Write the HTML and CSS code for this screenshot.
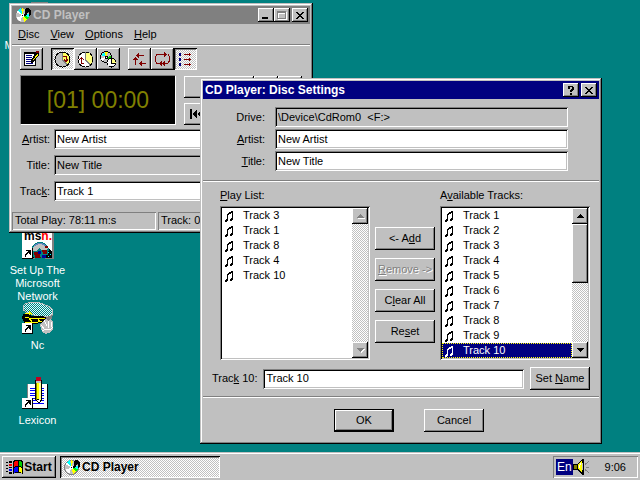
FILE: index.html
```html
<!DOCTYPE html>
<html lang="en">
<head>
<meta charset="utf-8">
<title>Desktop</title>
<link rel="stylesheet" href="styles.css">
</head>
<body>
<svg class="defs" aria-hidden="true">
  <symbol id="note" viewBox="0 0 9 12">
    <path d="M2 4h1v6h-1zM7 1h1v9h-1zM3 3h2v1h-2zM4 2h2v1h-2zM6 1h1v1h-1zM3 4h1v1h-1zM5 3h1v1h-1zM6 2h1v1h-1zM1 9h2v2h-2zM0 10h2v2h-2zM6 8h2v2h-2zM5 9h2v2h-2z" fill="currentColor"/>
  </symbol>
  <symbol id="cd" viewBox="0 0 17 16">
    <circle cx="7.5" cy="8.5" r="7" fill="#c0c0c0" stroke="#808080"/>
    <path d="M7.5 8.5L1 5L4 2z" fill="#fff"/>
    <path d="M7.5 8.5L3 3L6 1z" fill="#0ff"/>
    <path d="M7.5 8.5L7 1L9 2z" fill="#ff0"/>
    <path d="M7.5 8.5L14 10L12 13z" fill="#0f0"/>
    <path d="M7.5 8.5L12 13L9 15z" fill="#ff0"/>
    <path d="M7.5 8.5L5 15L1 11z" fill="#fff"/>
    <path d="M7.5 8.5L14 10L14 7z" fill="#0ff"/>
    <rect x="6" y="7" width="3" height="3" fill="#fff"/><rect x="7" y="8" width="1" height="1"/>
    <path d="M11 1h3v1h1v1h1v5h-1v1h-1V5h-1v1h-1v2h-1v1H9V7h1V2h1z"/>
  </symbol>
  <symbol id="shortcut" viewBox="0 0 11 11">
    <path d="M0 0h11v11H0z"/><path d="M0 0h10v10H0z" fill="#fff"/>
    <path d="M4 2h5v5H8V6H7V5H6v1H5v1H4v2H3V6h1V5h1V4h1V3H4z"/>
  </symbol>
  <symbol id="up" viewBox="0 0 7 4"><path d="M3 0h1v1h1v1h1v1h1v1H0V3h1V2h1V1h1z" fill="currentColor"/></symbol>
  <symbol id="down" viewBox="0 0 7 4"><path d="M0 0h7v1H6v1H5v1H4v1H3V3H2V2H1V1H0z" fill="currentColor"/></symbol>
  <symbol id="close" viewBox="0 0 8 7"><path d="M0 0h2v1h1v1h2V1h1V0h2v1H7v1H6v1H5v1h1v1h1v1h1v1H6V6H5V5H3v1H2v1H0V6h1V5h1V4h1V3H2V2H1V1H0z"/></symbol>
</svg>

<main class="desktop">
  <div class="shortcuts">
    <div class="shortcut row1">
      <svg width="32" height="32" viewBox="0 0 32 32"><path d="M9 0h17v18H9z" fill="#808080"/><path d="M11 3h13v11H11z" fill="#008080"/></svg>
      <span>My Computer</span>
    </div>
    <div class="shortcut row4">
      <svg width="32" height="32" viewBox="0 0 32 32">
        <path d="M0 0h32v32H0z" fill="#808080"/><path d="M0 0h30v31H0z" fill="#fff"/>
        <text x="2" y="13" class="msn">ms<tspan fill="#f00">n.</tspan></text>
        <path d="M10 25l4-4h12l4 4v6H10z"/>
        <circle cx="18" cy="24" r="9" fill="#008080"/>
        <path d="M10 21q8-8 16 0l-2 2h-4l-3-2-3 3h-4z" fill="#c0c0c0"/>
        <path d="M12 19q6-5 12 0" fill="none" stroke="#6080c0"/>
        <path d="M20 23h5v4h-4zM12 25h5l2 6h-6zM23 19h3v2h-3z" fill="#800000"/>
        <path d="M16 24h3v3h-3zM20 28h4v3h-4z" fill="#0000a0"/>
        <path d="M26 24h3v7h-5v-3h2z"/>
        <path d="M26 25h1v1h-1zM28 27h1v1h-1zM26 29h1v1h-1z" fill="#0ff"/>
        <use href="#shortcut" y="21" width="11" height="11"/>
      </svg>
      <span>Set Up The Microsoft Network</span>
    </div>
    <div class="shortcut row5">
      <svg width="32" height="32" viewBox="0 0 32 32">
        <defs><pattern id="mesh" width="2" height="2" patternUnits="userSpaceOnUse"><path d="M0 0h2v2H0z" fill="#008080"/><path d="M0 0h1v1H0zM1 1h1v1H1z" fill="#dff"/></pattern></defs>
        <path d="M3 2l6-2 9 1 8 3 4 3 1 5-4 3-12-1-9-3-5-3V4z" fill="url(#mesh)" stroke="#c0c0c0"/>
        <path d="M1 12l3-1 6 3h9l6 1 4 1-3 4-8 1-9 2-6-1-3-6z"/>
        <path d="M3 15q8 3 20 1M3 20q8 2 17-1M3 11l4 1v-3l3 4M7 16l3 4M16 17l2 3" fill="none" stroke="#ff0"/>
        <path d="M24 15l7-2-2 5-6 2z" fill="#808080"/>
        <path d="M22 18q3-3 4 1 4-4 5 1v8l-4 3q-5 2-7-2l-2-6 2-3z" fill="#c0c0c0"/>
        <path d="M22 18l3 6M26 19l1 7M19 23l4 5M20 29l4-2 4 1 3-3M29 20v5" fill="none" stroke="#fff"/>
        <use href="#shortcut" y="21" width="11" height="11"/>
      </svg>
      <span>Nc</span>
    </div>
    <div class="shortcut row6">
      <svg width="32" height="32" viewBox="0 0 32 32">
        <path d="M6 7h20v25H6z"/><path d="M6 7h19v24H6z" fill="#fff"/><path d="M5 7h1v15h-1z" fill="#808080"/>
        <path d="M8 11.5h14M8 13.5h14M8 16.5h14M8 18.5h14M8 21.5h14M11 23.5h11M11 26.5h11" stroke="#00f"/>
        <path d="M13 3h7v20l-2 3h-2l-3-3z"/><path d="M14 5h1v18h-1z" fill="#808000"/><path d="M15 5h2v17h-2z" fill="#ff0"/><path d="M17 5h2v18h-2z" fill="#ffffa0"/>
        <path d="M14 0h5v4h-5z" fill="#c00020"/><path d="M14 4h5v2h-5z" fill="#c0c0c0"/><path d="M15 23h3v1l-1 1h-1z" fill="#fff"/>
        <use href="#shortcut" y="21" width="11" height="11"/>
      </svg>
      <span>Lexicon</span>
    </div>
  </div>

  <section class="window player" aria-label="CD Player">
    <header class="titlebar inactive">
      <svg class="app-icon" width="17" height="16"><use href="#cd"/></svg>
      <h1>CD Player</h1>
      <div class="caption-buttons">
        <button class="cap" aria-label="Minimize"><svg width="8" height="7"><path d="M0 5h6v2H0z"/></svg></button>
        <button class="cap" aria-label="Maximize" disabled><svg width="10" height="9" viewBox="0 0 10 9"><path d="M1 1h9v8H1zM2 3v5h7V3z" fill="#fff" fill-rule="evenodd"/><path d="M0 0h9v8H0zM1 2v5h7V2z" fill="#808080" fill-rule="evenodd"/></svg></button>
        <button class="cap cap-close" aria-label="Close"><svg width="8" height="7"><use href="#close"/></svg></button>
      </div>
    </header>
    <nav class="menubar">
      <button><u>D</u>isc</button><button><u>V</u>iew</button><button><u>O</u>ptions</button><button><u>H</u>elp</button>
    </nav>
    <div class="toolbar">
      <div class="group">
        <button class="tool" aria-label="Edit play list"><svg width="16" height="16" viewBox="0 0 16 16"><path d="M0 1h12v14H0z"/><path d="M1 3h10v11H1z" fill="#fff"/><path d="M2 4.500h6M2 6.500h6M2 8.500h5M2 10.500h7M2 12.500h7" stroke="#000080"/><path d="M7 9l5-8h3v3l-5 7-3 1z"/><path d="M9 9l4-6 1 1-4 5z" fill="#ff0"/><path d="M12 0h3v2h-3z" fill="#800000"/></svg></button>
      </div>
      <div class="group">
        <button class="tool pressed" aria-label="Track time elapsed"><svg width="17" height="17" viewBox="0 0 17 17"><circle cx="8.500" cy="8.500" r="7.500" fill="#c0c0c0" stroke="#000"/><path d="M8.500 8.500V1a7.500 7.500 0 0 1 5 13z" fill="#ffff60"/><path d="M8.500 1v8l5 5" fill="none" stroke="#808080"/><path d="M9 5.500h3v5M10 8.500l2 2 2-2" fill="none" stroke="#800000"/><circle cx="8.500" cy="8.500" r="7.500" fill="none" stroke="#000"/></svg></button>
        <button class="tool" aria-label="Track time remaining"><svg width="17" height="17" viewBox="0 0 17 17"><circle cx="8.500" cy="8.500" r="7.500" fill="#fff" stroke="#808080"/><path d="M8.500 8.500V1a7.500 7.500 0 0 1 5 13z" fill="#ffff80"/><path d="M8.500 1v8l5 5" fill="none" stroke="#808080"/><path d="M7 12.500H4.500v-6M2 9l2.500-2.500L7 9" fill="none" stroke="#800000"/><circle cx="8.500" cy="8.500" r="7.500" fill="none" stroke="#000" stroke-dasharray="3 1"/></svg></button>
        <button class="tool" aria-label="Disc time remaining"><svg width="17" height="17" viewBox="0 0 17 17"><circle cx="6" cy="6" r="5.500" fill="#c0c0c0" stroke="#000"/><path d="M6 6L1 4l3-3z" fill="#0ff"/><path d="M6 6L5 1h3z" fill="#ff0"/><path d="M6 6l5-1v4z" fill="#0c0"/><path d="M6 6l-4 4-1-3z" fill="#fff"/><path d="M5 5h3v3H5z"/><path d="M6 6h1v1H6z" fill="#fff"/><circle cx="11.500" cy="11.500" r="4.500" fill="#fff" stroke="#000"/><path d="M12 12V8l3 1 1 3z" fill="#ffff80"/><path d="M11.500 8v4h4" fill="none" stroke="#000"/></svg></button>
      </div>
      <div class="group">
        <button class="tool" aria-label="Random track order"><svg width="14" height="13" viewBox="0 0 14 13" class="red"><path d="M4 2.500h7M2.500 12V6M7 10.500h6"/><path class="fill" d="M3 2.500L6 0v5zM2.500 4L0 7h5zM6 10.500L9 8v5z"/></svg></button>
        <button class="tool" aria-label="Continuous play"><svg width="17" height="14" viewBox="0 0 17 14" class="red"><path d="M10 2.500h-7L1.500 5v4L3 11.500h2M14 11l1.500-2V5L14 2.500M10 11.500h4"/><path class="fill" d="M13 2.500L10 0v5zM5 11.500L8 9v5zM8 11.500L11 9v5z"/></svg></button>
        <button class="tool pressed" aria-label="Intro play"><svg width="15" height="14" viewBox="0 0 15 14" class="red"><path d="M6 2.500h7M6 7.500h7M6 12.500h7M11.500 1v3M11.500 6v3M11.500 11v3"/><path class="blue" d="M1 1h2v3H1zM1 6h2v3H1zM1 11h2v3H1z"/></svg></button>
      </div>
    </div>
    <div class="deck">
      <output class="lcd">[01] 00:00</output>
      <div class="transport">
        <button class="push play" aria-label="Play"></button><button class="push" aria-label="Pause"></button><button class="push" aria-label="Stop"></button>
        <div class="skip"><button class="push" aria-label="Previous track"><svg width="12" height="10" viewBox="0 0 12 10"><path d="M0 0h2v10H0zM2 5l5-5v10zM7 5l5-5v10z"/></svg></button><button class="push" aria-label="Skip backwards"></button><button class="push" aria-label="Skip forwards"></button><button class="push" aria-label="Next track"></button><button class="push" aria-label="Eject"></button></div>
      </div>
    </div>
    <div class="fields">
      <label for="p-artist"><u>A</u>rtist:</label><input id="p-artist" class="sunken" value="New Artist">
      <label for="p-title">Title:</label><input id="p-title" class="sunken readonly" value="New Title" readonly>
      <label for="p-track">Trac<u>k</u>:</label><input id="p-track" class="sunken" value="Track 1">
    </div>
    <footer class="statusbar"><span>Total Play: 78:11 m:s</span><span>Track: 04:12 m:s</span></footer>
  </section>

  <section class="window dialog" role="dialog" aria-label="CD Player: Disc Settings">
    <header class="titlebar">
      <h2>CD Player: Disc Settings</h2>
      <div class="caption-buttons">
        <button class="cap" aria-label="Help"><svg width="8" height="9"><path d="M1 0h5v1h1v3H6v1H5v1H3V4h1V3h1V1H3v2H1V1H0V1h1zM3 7h2v2H3z"/></svg></button>
        <button class="cap cap-close" aria-label="Close"><svg width="8" height="7"><use href="#close"/></svg></button>
      </div>
    </header>
    <div class="disc-form">
      <label for="drive">Drive:</label><input id="drive" class="sunken readonly" value="\Device\CdRom0  &lt;F:&gt;" readonly>
      <label for="artist"><u>A</u>rtist:</label><input id="artist" class="sunken" value="New Artist">
      <label for="title"><u>T</u>itle:</label><input id="title" class="sunken" value="New Title">
    </div>
    <hr>
    <div class="lists">
      <div class="list-col">
        <span class="caption" id="play-label"><u>P</u>lay List:</span>
        <div class="listbox">
          <ul role="listbox" aria-labelledby="play-label">
            <li role="option"><svg><use href="#note"/></svg>Track 3</li>
            <li role="option"><svg><use href="#note"/></svg>Track 1</li>
            <li role="option"><svg><use href="#note"/></svg>Track 8</li>
            <li role="option"><svg><use href="#note"/></svg>Track 4</li>
            <li role="option"><svg><use href="#note"/></svg>Track 10</li>
          </ul>
          <div class="scrollbar">
            <button class="arrow" disabled aria-label="Scroll up"><svg width="7" height="4"><use href="#up"/></svg></button>
            <div class="trough"></div>
            <button class="arrow" disabled aria-label="Scroll down"><svg width="7" height="4"><use href="#down"/></svg></button>
          </div>
        </div>
      </div>
      <div class="actions">
        <button class="push"><span>&lt;- A<u>d</u>d</span></button>
        <button class="push" disabled><span><u>R</u>emove -&gt;</span></button>
        <button class="push"><span>C<u>l</u>ear All</span></button>
        <button class="push"><span>Re<u>s</u>et</span></button>
      </div>
      <div class="list-col">
        <span class="caption" id="avail-label">A<u>v</u>ailable Tracks:</span>
        <div class="listbox">
          <ul role="listbox" aria-labelledby="avail-label">
            <li role="option"><svg><use href="#note"/></svg>Track 1</li>
            <li role="option"><svg><use href="#note"/></svg>Track 2</li>
            <li role="option"><svg><use href="#note"/></svg>Track 3</li>
            <li role="option"><svg><use href="#note"/></svg>Track 4</li>
            <li role="option"><svg><use href="#note"/></svg>Track 5</li>
            <li role="option"><svg><use href="#note"/></svg>Track 6</li>
            <li role="option"><svg><use href="#note"/></svg>Track 7</li>
            <li role="option"><svg><use href="#note"/></svg>Track 8</li>
            <li role="option"><svg><use href="#note"/></svg>Track 9</li>
            <li role="option" class="selected" aria-selected="true"><svg><use href="#note"/></svg>Track 10</li>
          </ul>
          <div class="scrollbar">
            <button class="arrow" aria-label="Scroll up"><svg width="7" height="4"><use href="#up"/></svg></button>
            <div class="trough"><div class="thumb"></div></div>
            <button class="arrow" aria-label="Scroll down"><svg width="7" height="4"><use href="#down"/></svg></button>
          </div>
        </div>
      </div>
    </div>
    <div class="name-row">
      <label for="track-name">Trac<u>k</u> 10:</label><input id="track-name" class="sunken" value="Track 10">
      <button class="push"><span>Set <u>N</u>ame</span></button>
    </div>
    <hr>
    <footer class="dialog-buttons"><button class="push default">OK</button><button class="push">Cancel</button></footer>
  </section>
</main>

<footer class="taskbar">
  <button class="push start"><svg width="18" height="16" viewBox="0 0 18 16">
    <path d="M7 2q4-3 10 0v13q-5-3-10 0z"/>
    <path d="M8 3q2-1 4-1v5q-2 0-4 1z" fill="#f00"/><path d="M13 2l3 1v5l-3-1z" fill="#0c0"/><path d="M8 9q2-1 4-1v5q-2 0-4 1z" fill="#00f"/><path d="M13 8l3 1v5l-3-1z" fill="#ff0"/>
    <path d="M0 3h2v1H0zM0 6h2v1H0zM0 9h2v1H0zM0 12h2v1H0zM3 2h3v2H3zM3 8h3v1H3zM3 13h3v2H3z"/>
    <path d="M3 5h3v2H3z" fill="#f00"/><path d="M3 10h3v2H3z" fill="#00f"/></svg>Start</button>
  <button class="push task pressed"><svg width="17" height="16"><use href="#cd"/></svg>CD Player</button>
  <div class="tray"><span class="lang">En</span><svg width="17" height="16" viewBox="0 0 17 16"><path d="M0 5h4l5-5h2v16H9l-5-5H0z"/><path d="M1 6h3v4H1zM5 5l4-4v13l-4-4z" fill="#ff0"/><path d="M1 6h3v4H1z" fill="#808000"/><path d="M7 4h1v2H7zM6 6h1v3H6z" fill="#fff"/><path d="M9 4h1v7H9z" fill="#c0c0c0"/><path d="M12 5.500l4-3M13 8h3M12 10.500l4 3" stroke="#808080"/></svg><time>9:06</time></div>
</footer>
</body>
</html>
```
FILE: styles.css
```css
* { box-sizing: border-box; }

body {
  margin: 0;
  min-height: 100vh;
  display: flex;
  flex-direction: column;
  background: #008080;
  color: #000;
  font: 11px/13px "Liberation Sans", Arial, sans-serif;
}

button, input { font: inherit; color: inherit; margin: 0; border-radius: 0; }
button { padding: 0; border: 0; background: #c0c0c0; }
svg { display: block; flex: none; shape-rendering: crispEdges; }
u { text-underline-offset: 1px; text-decoration-thickness: 1px; text-decoration-skip-ink: none; }
.defs { position: absolute; width: 0; height: 0; }

.desktop { flex: 1; position: relative; overflow: hidden; }

/* Desktop shortcuts */
.shortcuts {
  display: grid;
  grid-template-rows: repeat(6, 75px);
  width: 75px;
  padding-top: 2px;
}
.shortcut {
  display: flex;
  flex-direction: column;
  align-items: center;
  gap: 5px;
  color: #fff;
  text-align: center;
}
.shortcut span { max-width: 68px; }
.row1 { grid-row: 1; }
.row4 { grid-row: 4; }
.row5 { grid-row: 5; }
.row6 { grid-row: 6; }
.msn { font: bold 12px "Liberation Sans", Arial, sans-serif; }

/* Windows */
.window {
  position: absolute;
  padding: 3px;
  background: #c0c0c0;
  box-shadow: inset -1px -1px #000, inset 1px 1px #c0c0c0, inset -2px -2px #808080, inset 2px 2px #fff;
}
.player { left: 9px; top: 3px; width: 304px; }
.dialog { left: 200px; top: 78px; width: 402px; }

.titlebar {
  display: flex;
  align-items: center;
  height: 18px;
  padding: 0 2px;
  background: #000080;
  color: #fff;
}
.titlebar.inactive { background: #808080; color: #c0c0c0; }
.titlebar h1, .titlebar h2 { margin: 0; font: bold 12px/14px "Liberation Sans", Arial, sans-serif; }
.app-icon { margin: 0 1px; }
.caption-buttons { display: flex; margin-left: auto; }

.cap, .push, .arrow, .thumb, .tool {
  display: flex;
  align-items: center;
  justify-content: center;
  box-shadow: inset -1px -1px #000, inset 1px 1px #fff, inset -2px -2px #808080;
}
.cap { width: 16px; height: 14px; }
.cap-close { margin-left: 2px; }

.menubar { display: flex; height: 20px; padding: 0 6px; gap: 11px; }

.toolbar {
  display: flex;
  gap: 8px;
  padding: 4px 8px 5px;
  box-shadow: inset 0 1px #808080, inset 0 2px #fff;
}
.group { display: flex; }
.tool { width: 23px; height: 22px; }
.pressed, .trough {
  background: repeating-conic-gradient(#fff 0 25%, #c0c0c0 0 50%) 0 0 / 2px 2px;
}
.pressed { box-shadow: inset 1px 1px #000, inset -1px -1px #fff, inset 2px 2px #808080; }
.red { fill: none; stroke: #800000; }
.red .fill { fill: #800000; stroke: none; }
.red .blue { fill: #000080; stroke: none; }

.deck { display: flex; gap: 8px; padding: 0 8px; }
.lcd {
  flex: none;
  width: 156px;
  height: 50px;
  background: #000;
  border: 1px solid;
  border-color: #808080 #fff #fff #808080;
  color: #808000;
  font-size: 23px;
  line-height: 48px;
  text-align: center;
}
.transport { flex: 1; display: grid; grid-template-columns: 1fr 24px 24px; row-gap: 5px; align-content: center; }
.transport .push { height: 22px; min-width: 24px; }
.skip { grid-column: 1 / -1; display: flex; }
.skip .push { flex: 1; }

.sunken {
  width: 100%;
  min-width: 0;
  height: 20px;
  padding: 0 3px 1px;
  border: 0;
  outline: 0;
  white-space: pre;
  background: #fff;
  box-shadow: inset 1px 1px #808080, inset -1px -1px #fff, inset 2px 2px #000, inset -2px -2px #c0c0c0;
}
.sunken.readonly { background: #c0c0c0; }

.fields {
  display: grid;
  grid-template-columns: 38px 1fr;
  align-items: center;
  gap: 6px 4px;
  padding: 4px 8px 11px 0;
}
.fields label, .disc-form label { text-align: right; }

.statusbar { display: grid; grid-template-columns: 144px 1fr; gap: 2px; }
.statusbar span {
  height: 18px;
  padding: 2px 3px;
  white-space: nowrap;
  box-shadow: inset 1px 1px #808080, inset -1px -1px #fff;
}

/* Disc settings dialog */
.disc-form {
  display: grid;
  grid-template-columns: 62px 1fr;
  align-items: center;
  gap: 2px 10px;
  padding: 8px 31px 9px 0;
}
hr { width: 100%; height: 2px; margin: 0; border: 0; background: linear-gradient(#808080 50%, #fff 50%); }

.lists {
  display: grid;
  grid-template-columns: 1fr 60px 1fr;
  gap: 5px;
  padding: 7px 9px 0 17px;
}
.list-col { display: flex; flex-direction: column; gap: 4px; }
.listbox {
  display: flex;
  height: 154px;
  padding: 2px;
  background: #fff;
  box-shadow: inset 1px 1px #808080, inset -1px -1px #fff, inset 2px 2px #000, inset -2px -2px #c0c0c0;
}
.listbox ul { flex: 1; margin: 0; padding: 0; list-style: none; }
.listbox li { display: flex; align-items: center; gap: 9px; height: 15px; padding-left: 3px; }
.listbox li svg { width: 9px; height: 12px; }
.listbox li.selected { background: #000080; color: #fff; outline: 1px dotted #ff0; outline-offset: -1px; }

.scrollbar { display: flex; flex-direction: column; width: 16px; }
.arrow { height: 16px; width: 16px; }
.arrow:disabled { color: #808080; }
.arrow:disabled svg { filter: drop-shadow(1px 1px #fff); }
.trough { flex: 1; }
.thumb { height: 50%; background: #c0c0c0; }

.push { height: 23px; }
.push:disabled { color: #808080; text-shadow: 1px 1px #fff; }
.actions { display: flex; flex-direction: column; gap: 8px; padding-top: 38px; }

.name-row { display: flex; align-items: center; gap: 6px; padding: 7px 9px 6px; }
.name-row label { white-space: nowrap; }
.name-row .sunken { flex: 1; }
.name-row .push, .dialog-buttons .push { width: 60px; flex: none; }

.dialog-buttons { display: flex; justify-content: center; gap: 30px; padding: 11px 0 9px 16px; }
.push.default {
  border: 1px solid #000;
}

/* Taskbar */
.taskbar {
  display: flex;
  align-items: center;
  gap: 4px;
  height: 28px;
  padding: 4px 2px 2px;
  background: #c0c0c0;
  box-shadow: inset 0 1px #c0c0c0, inset 0 2px #fff;
}
.taskbar .push { height: 22px; font: bold 12px/14px "Liberation Sans", Arial, sans-serif; }
.start { width: 54px; }
.taskbar .task { width: 160px; padding-left: 4px; gap: 1px; justify-content: flex-start; }
.tray {
  display: flex;
  align-items: center;
  width: 85px;
  height: 22px;
  margin-left: auto;
  padding: 0 12px 0 3px;
  box-shadow: inset 1px 1px #808080, inset -1px -1px #fff;
}
.lang { padding: 1px; background: #000080; color: #fff; font-size: 12px; line-height: 14px; }
.tray time { margin-left: auto; }
```
